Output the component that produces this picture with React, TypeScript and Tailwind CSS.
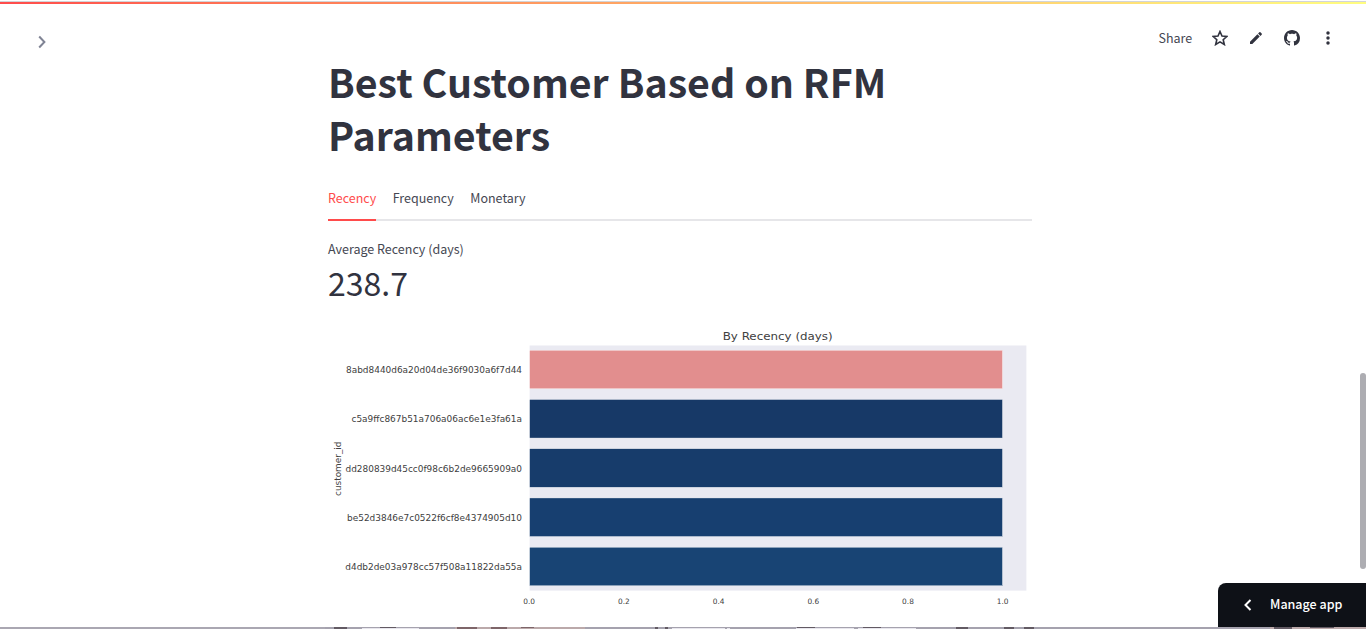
import React from "react";

const sourceFont = "font-['Noto_Sans_CJK_JP','Noto_Sans',sans-serif]";

const tabs = ["Recency", "Frequency", "Monetary"];

const bars = [
  { id: "8abd8440d6a20d04de36f9030a6f7d44", color: "#e28e8e", x: 346 },
  { id: "c5a9ffc867b51a706a06ac6e1e3fa61a", color: "#173967", x: 351.5 },
  { id: "dd280839d45cc0f98c6b2de9665909a0", color: "#173c6b", x: 345.5 },
  { id: "be52d3846e7c0522f6cf8e4374905d10", color: "#173f70", x: 347 },
  { id: "d4db2de03a978cc57f508a11822da55a", color: "#184474", x: 345.3 },
];

const ticks = ["0.0", "0.2", "0.4", "0.6", "0.8", "1.0"];

function RecencyChart() {
  return (
    <svg
      className="block h-[287px] w-[704px] shrink-0 font-['DejaVu_Sans',sans-serif]"
      viewBox="328 325 704 287"
      fill="#404040"
    >
      <text x="722.7" y="340.2" fontSize="11.2" textLength="110" lengthAdjust="spacingAndGlyphs">
        By Recency (days)
      </text>
      <rect x="529.6" y="345.5" width="496.8" height="245.1" fill="#eaeaf2" />
      {bars.map((bar, i) => (
        <g key={bar.id}>
          <rect x="529.6" y={350.2 + i * 49.25} width="472.9" height="38.6" fill={bar.color} stroke="#fff" strokeWidth="0.4" />
          <text
            x={bar.x}
            y={373 + i * 49.25}
            fontSize="9"
            textLength={522 - bar.x}
            lengthAdjust="spacingAndGlyphs"
          >
            {bar.id}
          </text>
        </g>
      ))}
      {ticks.map((tick, i) => (
        <text key={tick} x={529.2 + i * 94.7} y="604" fontSize="7.4" textAnchor="middle">
          {tick}
        </text>
      ))}
      <text transform="translate(340.6 496) rotate(-90)" fontSize="9.2" textLength="54.5" lengthAdjust="spacingAndGlyphs">
        customer_id
      </text>
    </svg>
  );
}

function Toolbar() {
  return (
    <div className="flex items-center text-[#31333f]">
      <span className="mr-5 h-5 w-[33.5px] whitespace-nowrap text-[12.5px] leading-5 text-[#454752]">Share</span>
      <svg className="mr-5 size-4" viewBox="0 0 24 24" fill="none" stroke="currentColor" strokeWidth="2.4">
        <path d="M12 2.2l3 6.9 7.4.6-5.6 4.9 1.7 7.2-6.5-3.9-6.5 3.9 1.7-7.2-5.6-4.9 7.4-.6z" />
      </svg>
      <svg className="mr-5 size-4" viewBox="0 0 24 24" fill="currentColor">
        <path d="M3 17.5V21h3.5L17.6 9.9l-3.5-3.5zM20.5 7a1.2 1.2 0 0 0 0-1.7l-1.8-1.8a1.2 1.2 0 0 0-1.7 0l-1.9 1.9 3.5 3.5z" />
      </svg>
      <svg className="mr-5 size-4" viewBox="0 0 16 16" fill="currentColor">
        <path d="M8 0C3.58 0 0 3.58 0 8c0 3.54 2.29 6.53 5.47 7.59.4.07.55-.17.55-.38 0-.19-.01-.82-.01-1.49-2.01.37-2.53-.49-2.69-.94-.09-.23-.48-.94-.82-1.13-.28-.15-.68-.52-.01-.53.63-.01 1.08.58 1.23.82.72 1.21 1.87.87 2.33.66.07-.52.28-.87.51-1.07-1.78-.2-3.64-.89-3.64-3.95 0-.87.31-1.59.82-2.15-.08-.2-.36-1.02.08-2.12 0 0 .67-.21 2.2.82.64-.18 1.32-.27 2-.27s1.36.09 2 .27c1.53-1.04 2.2-.82 2.2-.82.44 1.1.16 1.92.08 2.12.51.56.82 1.27.82 2.15 0 3.07-1.87 3.75-3.65 3.95.29.25.54.73.54 1.48 0 1.07-.01 1.93-.01 2.2 0 .21.15.46.55.38A8 8 0 0 0 16 8c0-4.42-3.58-8-8-8" />
      </svg>
      <svg className="size-4" viewBox="0 0 16 16" fill="currentColor">
        <circle cx="8" cy="2.9" r="1.75" />
        <circle cx="8" cy="8" r="1.75" />
        <circle cx="8" cy="13.1" r="1.75" />
      </svg>
    </div>
  );
}

export default function App() {
  return (
    <div className={`relative flex h-[629px] w-[1366px] flex-col overflow-hidden bg-white text-[#31333f] ${sourceFont}`}>
      <div className="mt-px h-px shrink-0 bg-[#d2d4d8]" />
      <div className="h-0.5 shrink-0 bg-linear-to-r from-[#ff4b4b] to-[#fffd80]" />
      <header className="flex h-[50px] shrink-0 items-start justify-between pt-6 pr-[30px] pl-[34px]">
        <svg className="mt-1.5 size-4" viewBox="0 0 16 16" fill="none" stroke="#808495" strokeWidth="2">
          <path d="M5.2 2.5L10.4 8l-5.2 5.5" />
        </svg>
        <Toolbar />
      </header>

      <main className="ml-[328px] flex h-[573px] w-[704px] shrink-0 flex-col">
        <h1 className="h-[106px] shrink-0 whitespace-nowrap text-[39.3px] leading-[53px] font-bold">
          Best Customer Based on RFM
          <br />
          Parameters
        </h1>
        <nav className="mt-5 flex h-[41px] shrink-0 gap-[16.4px] border-b-2 border-[#e6e6e9]">
          {tabs.map((tab, i) => (
            <button
              key={tab}
              className={
                i === 0
                  ? "flex h-[41px] items-start border-b-2 border-[#ff4b4b] text-[12.5px] leading-[35px] text-[#ff4b4b]"
                  : "flex h-[41px] items-start text-[12.5px] leading-[35px] text-[#454752]"
              }
            >
              {tab}
            </button>
          ))}
        </nav>
        <section className="flex h-[104px] shrink-0 flex-col pt-[18px]">
          <p className="h-5 text-[12.5px] leading-5 text-[#454752]">Average Recency (days)</p>
          <p className="mt-0.5 h-[42px] text-[32px] leading-[42px]">238.7</p>
        </section>
        <RecencyChart />
      </main>

      <svg className="block h-0.5 w-full shrink-0" viewBox="0 0 1366 2" preserveAspectRatio="none">
        <rect width="1366" height="2" fill="#a5a2ae" />
        <rect x="0" width="325" height="2" fill="#aaa7b2" />
        <path fill="#bba9aa" d="M455 0h130v2H455zM1270 0h96v2h-96z" />
        <path fill="#625a63" d="M334 0h13v2h-13zM380 0h16v1h-16zM655 0h3v2h-3zM665 0h3v2h-3zM797 0h18v2h-18zM863 0h18v2h-18zM956 0h12v2h-12zM1004 0h10v2h-10zM1024 0h10v2h-10zM1274 0h18v2h-18zM1310 0h24v1h-24z" />
        <path fill="#e8e6ed" d="M362 1h57v1h-57zM672 1h53v1h-53zM727 1h3v1h-3zM796 1h58v1h-58zM858 1h58v1h-58z" />
        <path fill="#7e6569" d="M457 0h20v2h-20zM491 0h16v2h-16zM521 0h13v1h-13z" />
      </svg>

      <div className="absolute top-[373px] right-0 h-[196px] w-1.5 rounded-full bg-[#adadb2]" />
      <button className="absolute right-0 bottom-0.5 flex h-11 w-[148px] items-center rounded-tl-lg bg-[#0e1117] pl-[22px] text-white">
        <svg className="mr-[14px] size-4" viewBox="0 0 16 16" fill="none" stroke="currentColor" strokeWidth="2">
          <path d="M10.5 3L5.5 8l5 5" />
        </svg>
        <span className="-mt-0.5 text-[12.5px] leading-5 font-medium">Manage app</span>
      </button>
    </div>
  );
}
